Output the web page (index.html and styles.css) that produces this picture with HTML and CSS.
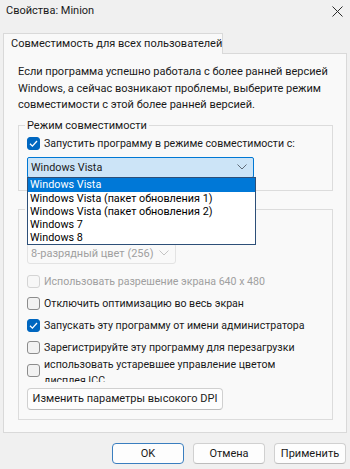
FILE: index.html
```html
<!DOCTYPE html>
<html lang="ru">
<head>
  <meta charset="UTF-8">
  <meta name="viewport" content="width=device-width, initial-scale=1.0">
  <title>Свойства: Minion</title>
  <link rel="stylesheet" href="styles.css">
</head>
<body>
  <div class="titlebar">
    <span class="title">Свойства: Minion</span>
    <span class="close">
      <svg width="11" height="11" viewBox="0 0 11 11"><path d="M0.5 0.5L10.5 10.5M10.5 0.5L0.5 10.5" stroke="#2b2b2b" stroke-width="1"/></svg>
    </span>
  </div>

  <div class="tabs">
    <div class="tab">Совместимость для всех пользователей</div>
  </div>

  <div class="panel">
    <p class="intro">Если программа успешно работала с более ранней версией<br>Windows, а сейчас возникают проблемы, выберите режим<br>совместимости с этой более ранней версией.</p>

    <fieldset class="group">
      <legend>Режим совместимости</legend>
      <label class="check">
        <span class="box checked"><svg width="13" height="13" viewBox="0 0 13 13"><path d="M3 6.8L5.4 9.1L10 4" fill="none" stroke="#fff" stroke-width="1.3"/></svg></span>
        Запустить программу в режиме совместимости с:
      </label>
      <div class="combo-wrap">
        <div class="combo open">
          <span>Windows Vista</span>
          <svg width="10" height="6" viewBox="0 0 10 6"><path d="M0.5 0.5L5 5L9.5 0.5" fill="none" stroke="#5f6b78" stroke-width="1"/></svg>
        </div>
        <ul class="dropdown">
          <li class="selected">Windows Vista</li>
          <li>Windows Vista (пакет обновления 1)</li>
          <li>Windows Vista (пакет обновления 2)</li>
          <li>Windows 7</li>
          <li>Windows 8</li>
        </ul>
      </div>
    </fieldset>

    <fieldset class="group second">
      <legend>Параметры</legend>
      <label class="check disabled"><span class="box"></span>Режим пониженной цветности</label>
      <div class="combo small disabled">
        <span>8-разрядный цвет (256)</span>
        <svg width="10" height="6" viewBox="0 0 10 6"><path d="M0.5 0.5L5 5L9.5 0.5" fill="none" stroke="#c4c4c4" stroke-width="1"/></svg>
      </div>
      <label class="check disabled row first"><span class="box"></span>Использовать разрешение экрана 640 x 480</label>
      <label class="check row"><span class="box"></span>Отключить оптимизацию во весь экран</label>
      <label class="check row">
        <span class="box checked"><svg width="13" height="13" viewBox="0 0 13 13"><path d="M3 6.8L5.4 9.1L10 4" fill="none" stroke="#fff" stroke-width="1.3"/></svg></span>
        Запускать эту программу от имени администратора
      </label>
      <label class="check row"><span class="box"></span>Зарегистрируйте эту программу для перезагрузки</label>
      <label class="check two-line"><span class="box"></span><span class="clip">использовать устаревшее управление цветом<br>дисплея ICC</span></label>
      <button class="btn dpi">Изменить параметры высокого DPI</button>
    </fieldset>
  </div>

  <div class="actions">
    <button class="btn default">OK</button>
    <button class="btn">Отмена</button>
    <button class="btn">Применить</button>
  </div>
</body>
</html>
```

FILE: styles.css
```css
body {
  margin: 0;
  width: 350px;
  height: 469px;
  overflow: hidden;
  background: #f0f0f0;
  font-family: Roboto, "Noto Sans", sans-serif;
  font-size: 11px;
  color: #1a1a1a;
}
.titlebar {
  height: 33px;
  box-sizing: border-box;
  padding: 3px 7px 0 6px;
  display: flex;
  justify-content: space-between;
  line-height: 16px;
}
.close svg {
  display: block;
  margin-top: 3px;
}
.tabs {
  padding-left: 3px;
  height: 20px;
}
.tab {
  display: inline-block;
  position: relative;
  box-sizing: border-box;
  height: 21px;
  width: 220px;
  padding: 0 7px;
  line-height: 19px;
  white-space: nowrap;
  border: 1px solid #d9d9d9;
  border-bottom: none;
  background: #f9f9f9;
}
.panel {
  margin: 0 3px;
  height: 380px;
  box-sizing: border-box;
  border: 1px solid #d9d9d9;
  background: #f9f9f9;
  padding: 10px 13px 0 14px;
}
.intro {
  margin: 0 0 4px;
  line-height: 16.5px;
  white-space: nowrap;
}
.group {
  margin: 0;
  padding: 0 8px 12px 8px;
  border: 1px solid #dcdcdc;
  min-width: 0;
}
.group legend {
  padding: 0 2px;
  margin-left: -2px;
  line-height: 16px;
}
.group.second {
  margin-top: 11px;
  padding-bottom: 9px;
}
.check {
  display: flex;
  align-items: center;
  height: 16px;
  margin-top: 2px;
  white-space: nowrap;
  font-size: 10.6px;
}
.check .box {
  width: 13px;
  height: 13px;
  box-sizing: border-box;
  border: 1px solid #8c8c8c;
  border-radius: 3px;
  background: #f2f2f2;
  margin-right: 4px;
  flex-shrink: 0;
}
.check .box.checked {
  border-color: #0067c0;
  background: #0067c0;
}
.check .box svg {
  display: block;
  margin: -1px;
}
.check.disabled {
  color: #a0a0a0;
}
.check.disabled .box {
  border-color: #d4d4d4;
  background: #f7f7f7;
}
.check.row {
  margin-top: 6px;
}
.check.row.first {
  margin-top: 10px;
}
.check.two-line {
  height: 25px;
  margin-top: 2px;
}
.clip {
  display: block;
  height: 25px;
  overflow: hidden;
  line-height: 16px;
  margin-top: -1px;
}
.combo-wrap {
  position: relative;
  margin-top: 5px;
}
.combo {
  display: flex;
  align-items: center;
  justify-content: space-between;
  box-sizing: border-box;
  width: 227px;
  height: 21px;
  padding: 0 6px 0 3px;
  border: 1px solid #d0d0d0;
  border-radius: 3px;
  background: #fdfdfd;
  font-size: 10.8px;
}
.combo.open {
  background: #cce4f7;
  border-color: #0078d4;
  border-radius: 2px;
}
.combo.small {
  width: 149px;
  margin-top: 7px;
  font-size: 11px;
}
.combo.disabled {
  color: #a0a0a0;
  background: #f9f9f9;
  border-color: #e3e3e3;
}
.dropdown {
  position: absolute;
  top: 20px;
  left: 0;
  z-index: 2;
  width: 229px;
  box-sizing: border-box;
  margin: 0;
  padding: 0;
  list-style: none;
  border: 1px solid #2d4f78;
  background: #fff;
  color: #000;
  font-size: 10.8px;
}
.dropdown li {
  height: 13px;
  line-height: 13px;
  padding-left: 2px;
}
.dropdown li.selected {
  height: 14px;
  line-height: 14px;
  background: #0078d7;
  color: #fff;
}
.btn {
  font-family: inherit;
  font-size: 11px;
  color: #1a1a1a;
  background: #fdfdfd;
  border: 1px solid #d0d0d0;
  border-bottom-color: #bcbcbc;
  border-radius: 4px;
  height: 22px;
  padding: 0;
}
.btn.dpi {
  display: block;
  width: 196px;
  margin-top: 5px;
}
.actions {
  display: flex;
  justify-content: flex-end;
  gap: 9px;
  margin-top: 10px;
  padding-right: 4px;
}
.actions .btn {
  width: 72px;
  height: 21px;
}
.actions .btn.default {
  border: 1px solid #3a7ebf;
}
```
